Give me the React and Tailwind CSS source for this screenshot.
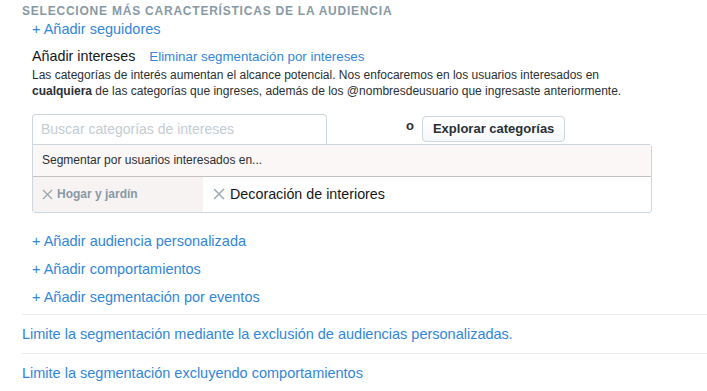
const LINK = "text-[#3186da]";

function Cross({ size = 11 }) {
  return (
    <svg width={size} height={size} viewBox="0 0 11 11" className="shrink-0">
      <path d="M1 1L10 10M10 1L1 10" stroke="#9aa6ae" strokeWidth="1.3" fill="none" />
    </svg>
  );
}

export default function App() {
  return (
    <div className="min-h-screen bg-white font-['Liberation_Sans',Arial,sans-serif] text-[#292f33] overflow-hidden">
      <div className="pl-[22px]">
        {/* Section header */}
        <h2 className="text-[12px] font-bold uppercase tracking-[0.065em] text-[#8899a6] leading-[14px] pt-[4px]">
          Seleccione más características de la audiencia
        </h2>

        <div className="pl-[10px]">
          <a className={`block text-[14.5px] leading-[18px] mt-[2px] ${LINK}`}>+ Añadir seguidores</a>

          {/* Interests */}
          <div className="mt-[9px] flex items-baseline gap-[14px]">
            <span className="text-[14.3px] leading-[18px] text-[#14171a]">Añadir intereses</span>
            <a className={`text-[13.3px] ${LINK}`}>Eliminar segmentación por intereses</a>
          </div>
          <p className="text-[12px] leading-[16px] text-[#292f33] w-[620px]">
            Las categorías de interés aumentan el alcance potencial. Nos enfocaremos en los usuarios interesados en{" "}
            <b>cualquiera</b> de las categorías que ingreses, además de los @nombresdeusuario que ingresaste anteriormente.
          </p>

          <div className="mt-[15px] w-[620px]">
            <div className="flex items-end">
              <div className="w-[295px] h-[30px] border border-b-0 border-[#ccd6dd] rounded-t-[4px] bg-white flex items-center px-[8px]">
                <span className="text-[14px] text-[#c3ccd3]">Buscar categorías de intereses</span>
              </div>
              <span className="ml-[79px] mb-[8px] text-[13px] font-bold text-[#292f33]">o</span>
              <button className="ml-[8px] mb-[2px] h-[26px] px-[10px] rounded-[4px] border border-[#ccd6dd] bg-gradient-to-b from-white to-[#f5f8fa] text-[13px] font-bold text-[#292f33]">
                Explorar categorías
              </button>
            </div>
            <div className="border border-[#ccd6dd] rounded-[3px] rounded-tl-none">
              <div className="h-[32px] bg-[#faf7f6] border-b border-[#c7c2c2] flex items-center pl-[9px] text-[12px] text-[#292f33]">
                Segmentar por usuarios interesados en...
              </div>
              <div className="flex h-[35px]">
                <div className="w-[170px] bg-[#f6f3f2] flex items-center pl-[9px] gap-[4px] text-[12px] font-bold text-[#8899a6]">
                  <Cross />
                  Hogar y jardín
                </div>
                <div className="flex items-center pl-[10px] gap-[5px] text-[14.3px] text-[#14171a]">
                  <Cross size={12} />
                  Decoración de interiores
                </div>
              </div>
            </div>
          </div>

          <div className="mt-[19px] flex flex-col gap-[10px] text-[14.5px] leading-[18px]">
            <a className={LINK}>+ Añadir audiencia personalizada</a>
            <a className={LINK}>+ Añadir comportamientos</a>
            <a className={LINK}>+ Añadir segmentación por eventos</a>
          </div>
        </div>

        <div className="mt-[8px] border-t border-[#e6ecf0]">
          <a className={`block text-[14.5px] leading-[18px] py-[10px] ${LINK}`}>
            Limite la segmentación mediante la exclusión de audiencias personalizadas.
          </a>
        </div>
        <div className="border-t border-[#e6ecf0]">
          <a className={`block text-[14.5px] leading-[18px] py-[10px] ${LINK}`}>
            Limite la segmentación excluyendo comportamientos
          </a>
        </div>
      </div>
    </div>
  );
}
